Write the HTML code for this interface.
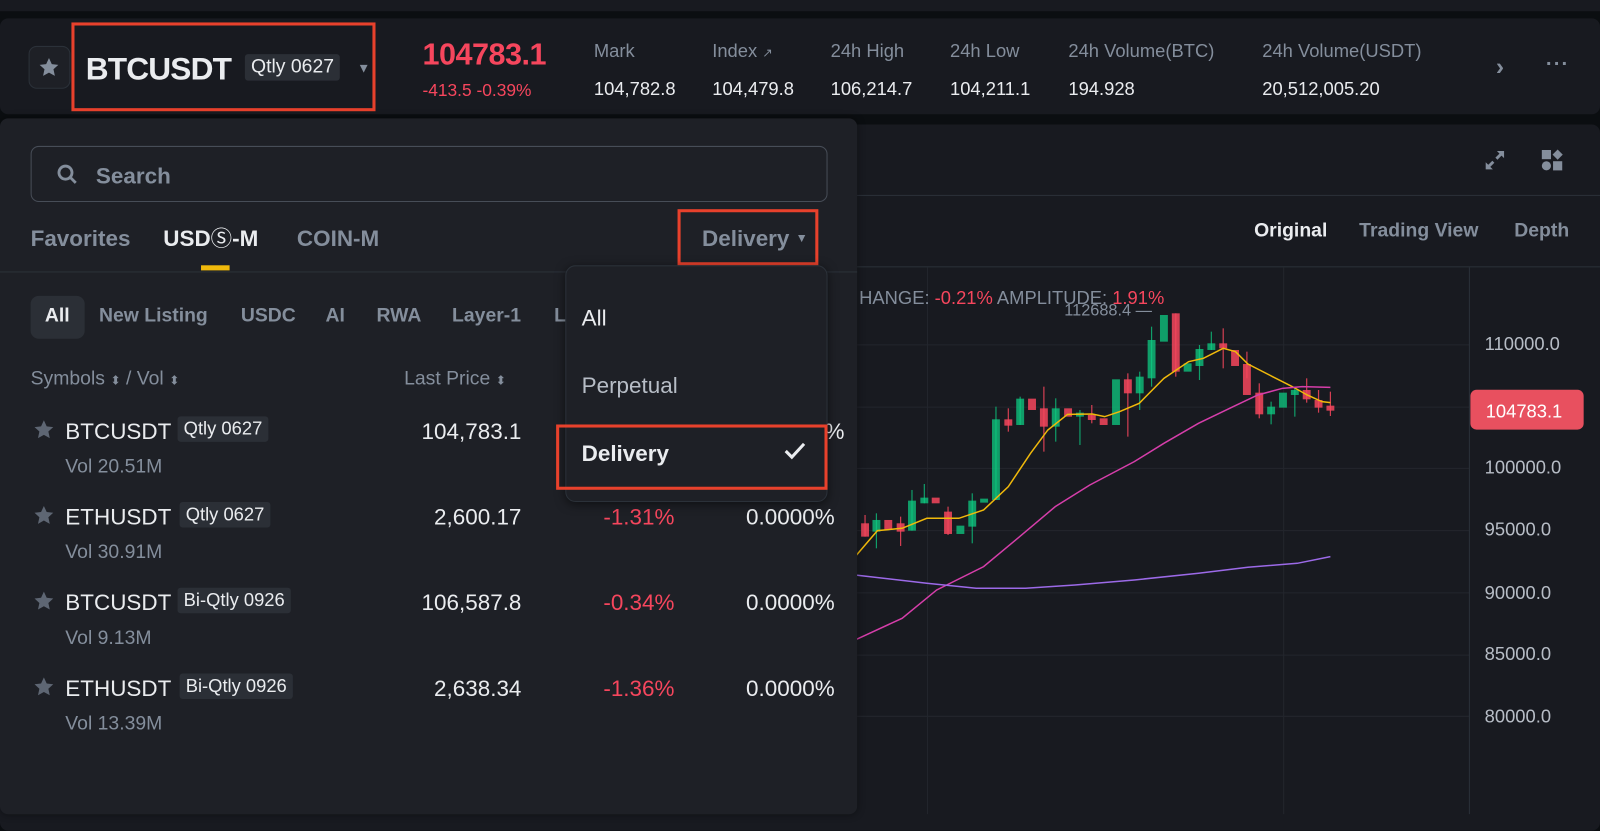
<!DOCTYPE html>
<html><head><meta charset="utf-8"><style>
*{margin:0;padding:0;box-sizing:border-box}
body{width:1600px;height:814px;overflow:hidden;background:#0b0e11;font-family:"Liberation Sans",sans-serif;position:relative;color:#eaecef}
#w{position:absolute;left:0;top:0;width:1568px;height:798px;transform:scale(1.0204);transform-origin:0 0}
.a{position:absolute;white-space:nowrap;line-height:1.15}
.g{color:#848e9c}
.w{color:#eaecef}
.r{color:#f6465d}
.red{border:3px solid #e8412c;position:absolute}
.tag{background:#2b2f36;border-radius:3px;padding:2px 6px;font-size:18px;color:#eaecef}
</style></head><body>
<div id="w">
<div class="a" style="left:0;top:0;width:1568px;height:11px;background:#181a20"></div>
<div class="a" style="left:0;top:18px;width:1568px;height:94px;background:#181a20;border-radius:8px"></div>
<div class="a" style="left:28px;top:45px;width:41px;height:42px;border:1px solid #2b3139;border-radius:8px;background:#1e2026"></div>
<svg class="a" style="left:37px;top:55px" width="22" height="22" viewBox="0 0 24 24"><path d="M12 2l3 6.5 7 .8-5.2 4.8 1.5 7L12 17.6 5.7 21.1l1.5-7L2 9.3l7-.8z" fill="#848e9c"/></svg>
<div class="a w" style="left:84px;top:50px;font-size:31px;font-weight:bold;letter-spacing:-0.8px">BTCUSDT</div>
<div class="a tag" style="left:240px;top:53px;font-size:19px">Qtly 0627</div>
<div class="a g" style="left:350px;top:60px;font-size:13px">▼</div>
<div class="red" style="left:70px;top:22px;width:298px;height:87px"></div>
<div class="a r" style="left:414px;top:37px;font-size:30px;font-weight:bold;letter-spacing:-0.5px">104783.1</div>
<div class="a r" style="left:414px;top:79px;font-size:17px">-413.5 -0.39%</div>
<div class="a g" style="left:582px;top:40px;font-size:18px">Mark</div>
<div class="a w" style="left:582px;top:77px;font-size:18px">104,782.8</div>
<div class="a g" style="left:698px;top:40px;font-size:18px">Index <span style="font-size:12px">↗</span></div>
<div class="a w" style="left:698px;top:77px;font-size:18px">104,479.8</div>
<div class="a g" style="left:814px;top:40px;font-size:18px">24h High</div>
<div class="a w" style="left:814px;top:77px;font-size:18px">106,214.7</div>
<div class="a g" style="left:931px;top:40px;font-size:18px">24h Low</div>
<div class="a w" style="left:931px;top:77px;font-size:18px">104,211.1</div>
<div class="a g" style="left:1047px;top:40px;font-size:18px">24h Volume(BTC)</div>
<div class="a w" style="left:1047px;top:77px;font-size:18px">194.928</div>
<div class="a g" style="left:1237px;top:40px;font-size:18px">24h Volume(USDT)</div>
<div class="a w" style="left:1237px;top:77px;font-size:18px">20,512,005.20</div>
<div class="a g" style="left:1466px;top:52px;font-size:24px;font-weight:bold">›</div>
<div class="a g" style="left:1515px;top:52px;font-size:20px;font-weight:bold;letter-spacing:1px">···</div>
<div class="a" style="left:0;top:122px;width:1568px;height:692px;background:#181a20;border-radius:8px"></div>
<div class="a" style="left:0;top:191px;width:1568px;height:1px;background:#2b3139"></div>
<div class="a" style="left:0;top:261px;width:1568px;height:1px;background:#2b3139"></div>
<svg class="a" style="left:1453px;top:145px" width="24" height="24" viewBox="0 0 24 24"><path d="M14 3h7v7l-2.5-2.5-4 4-2-2 4-4zM10 21H3v-7l2.5 2.5 4-4 2 2-4 4z" fill="#848e9c"/></svg>
<svg class="a" style="left:1509px;top:145px" width="24" height="24" viewBox="0 0 24 24"><rect x="2" y="2" width="9" height="9" fill="#848e9c"/><path d="M17.5 1.5l5 5-5 5-5-5z" fill="#848e9c"/><circle cx="6.5" cy="17.5" r="4.5" fill="#848e9c"/><rect x="13" y="13" width="9" height="9" fill="#848e9c"/></svg>
<div class="a w" style="left:1229px;top:216px;font-size:19px;font-weight:bold">Original</div>
<div class="a g" style="left:1332px;top:216px;font-size:19px;font-weight:bold">Trading View</div>
<div class="a g" style="left:1484px;top:216px;font-size:19px;font-weight:bold">Depth</div>
<svg class="a" style="left:0;top:0" width="1568" height="798">
<g stroke="#23262d" stroke-width="1">
<line x1="830" y1="338" x2="1440" y2="338"/><line x1="830" y1="399" x2="1440" y2="399"/><line x1="830" y1="459" x2="1440" y2="459"/><line x1="830" y1="520" x2="1440" y2="520"/><line x1="830" y1="581" x2="1440" y2="581"/><line x1="830" y1="642" x2="1440" y2="642"/><line x1="830" y1="702" x2="1440" y2="702"/>
<line x1="909" y1="262" x2="909" y2="798"/><line x1="1258" y1="262" x2="1258" y2="798"/><line x1="1440" y1="262" x2="1440" y2="798" stroke="#2b3139"/>
</g>
</svg>
</div>
<svg class="a" style="left:0;top:0" width="1600" height="814">
<g transform="translate(828,260) scale(0.494,0.3333)">
<g fill="#0ecb81" fill-opacity="0.75">
<rect x="90" y="780" width="16" height="35"/><rect x="162" y="722" width="16" height="90"/><rect x="187" y="713" width="16" height="17"/><rect x="260" y="797" width="16" height="25"/><rect x="284" y="722" width="16" height="78"/><rect x="308" y="716" width="16" height="12"/><rect x="332" y="478" width="16" height="242"/><rect x="381" y="416" width="16" height="79"/><rect x="453" y="445" width="16" height="55"/><rect x="502" y="458" width="16" height="12"/><rect x="575" y="358" width="16" height="137"/><rect x="623" y="350" width="16" height="50"/><rect x="647" y="240" width="16" height="115"/><rect x="672" y="165" width="16" height="80"/><rect x="720" y="310" width="16" height="25"/><rect x="744" y="267" width="16" height="51"/><rect x="768" y="250" width="16" height="20"/><rect x="889" y="440" width="16" height="23"/><rect x="913" y="398" width="16" height="45"/><rect x="937" y="390" width="16" height="15"/>
</g>
<g fill="#f6465d" fill-opacity="0.85">
<rect x="67" y="790" width="16" height="40"/><rect x="114" y="780" width="16" height="30"/><rect x="139" y="790" width="16" height="25"/><rect x="210" y="713" width="16" height="17"/><rect x="235" y="755" width="16" height="67"/><rect x="357" y="478" width="16" height="19"/><rect x="405" y="416" width="16" height="34"/><rect x="429" y="445" width="16" height="55"/><rect x="478" y="445" width="16" height="25"/><rect x="526" y="465" width="16" height="15"/><rect x="550" y="475" width="16" height="20"/><rect x="599" y="358" width="16" height="42"/><rect x="696" y="160" width="16" height="175"/><rect x="792" y="250" width="16" height="15"/><rect x="816" y="270" width="16" height="48"/><rect x="840" y="312" width="16" height="93"/><rect x="865" y="398" width="16" height="65"/><rect x="961" y="390" width="16" height="28"/><rect x="985" y="420" width="16" height="23"/><rect x="1009" y="437" width="16" height="15"/>
</g>
<g stroke="#0ecb81" stroke-opacity="0.75" stroke-width="1.2">
<line x1="98" y1="760" x2="98" y2="865" vector-effect="non-scaling-stroke"/><line x1="170" y1="690" x2="170" y2="812" vector-effect="non-scaling-stroke"/><line x1="195" y1="672" x2="195" y2="730" vector-effect="non-scaling-stroke"/><line x1="292" y1="700" x2="292" y2="850" vector-effect="non-scaling-stroke"/><line x1="340" y1="440" x2="340" y2="720" vector-effect="non-scaling-stroke"/><line x1="389" y1="410" x2="389" y2="495" vector-effect="non-scaling-stroke"/><line x1="461" y1="415" x2="461" y2="545" vector-effect="non-scaling-stroke"/><line x1="510" y1="450" x2="510" y2="555" vector-effect="non-scaling-stroke"/><line x1="631" y1="335" x2="631" y2="450" vector-effect="non-scaling-stroke"/><line x1="655" y1="200" x2="655" y2="380" vector-effect="non-scaling-stroke"/><line x1="752" y1="255" x2="752" y2="360" vector-effect="non-scaling-stroke"/><line x1="776" y1="215" x2="776" y2="270" vector-effect="non-scaling-stroke"/><line x1="897" y1="425" x2="897" y2="493" vector-effect="non-scaling-stroke"/><line x1="945" y1="380" x2="945" y2="470" vector-effect="non-scaling-stroke"/>
</g>
<g stroke="#f6465d" stroke-opacity="0.85" stroke-width="1.2">
<line x1="75" y1="765" x2="75" y2="830" vector-effect="non-scaling-stroke"/><line x1="147" y1="770" x2="147" y2="858" vector-effect="non-scaling-stroke"/><line x1="243" y1="740" x2="243" y2="825" vector-effect="non-scaling-stroke"/><line x1="365" y1="445" x2="365" y2="515" vector-effect="non-scaling-stroke"/><line x1="437" y1="380" x2="437" y2="575" vector-effect="non-scaling-stroke"/><line x1="534" y1="435" x2="534" y2="490" vector-effect="non-scaling-stroke"/><line x1="607" y1="340" x2="607" y2="530" vector-effect="non-scaling-stroke"/><line x1="800" y1="205" x2="800" y2="325" vector-effect="non-scaling-stroke"/><line x1="848" y1="275" x2="848" y2="355" vector-effect="non-scaling-stroke"/><line x1="873" y1="370" x2="873" y2="475" vector-effect="non-scaling-stroke"/><line x1="969" y1="355" x2="969" y2="428" vector-effect="non-scaling-stroke"/><line x1="993" y1="390" x2="993" y2="458" vector-effect="non-scaling-stroke"/><line x1="1017" y1="395" x2="1017" y2="468" vector-effect="non-scaling-stroke"/><line x1="704" y1="160" x2="704" y2="350" vector-effect="non-scaling-stroke"/>
</g>
<polyline fill="none" stroke="#f0b90b" stroke-width="1.5" vector-effect="non-scaling-stroke" points="55,890 100,812 150,805 200,775 265,775 315,750 365,680 410,580 445,510 485,463 535,462 560,470 590,455 630,430 680,355 730,305 760,295 800,265 825,275 850,312 900,350 940,380 970,405 1000,425 1017,428"/>
<polyline fill="none" stroke="#d63eaa" stroke-width="1.5" vector-effect="non-scaling-stroke" points="55,1140 150,1075 220,990 315,920 380,840 460,740 530,675 620,605 680,550 750,490 820,440 870,405 920,385 960,380 1017,382"/>
<polyline fill="none" stroke="#9c6ae8" stroke-width="1.5" vector-effect="non-scaling-stroke" points="55,945 200,970 300,985 400,985 500,975 620,960 750,940 850,922 950,910 1017,890"/>
</g>
</svg>
<div id="w" style="pointer-events:none">
<svg class="a" style="left:0;top:0" width="1568" height="798">
<text x="1043" y="309" font-size="16" fill="#848e9c" font-family="Liberation Sans">112688.4 —</text>
<text x="842" y="298" font-size="18" fill="#848e9c" font-family="Liberation Sans">HANGE:  <tspan fill="#f6465d">-0.21%</tspan>  AMPLITUDE:  <tspan fill="#f6465d">1.91%</tspan></text>
<g font-size="18" fill="#b7bdc6" font-family="Liberation Sans">
<text x="1455" y="343">110000.0</text><text x="1455" y="464">100000.0</text><text x="1455" y="525">95000.0</text><text x="1455" y="587">90000.0</text><text x="1455" y="647">85000.0</text><text x="1455" y="708">80000.0</text>
</g>
<rect x="1441" y="382" width="111" height="39" rx="6" fill="#e8505f"/>
<text x="1456" y="409" font-size="18" fill="#fff" font-family="Liberation Sans">104783.1</text>
</svg>
<div class="a" style="left:0;top:116px;width:840px;height:682px;background:#1e2026;border-radius:8px;box-shadow:0 0 8px rgba(0,0,0,.4)"></div>
<div class="a" style="left:30px;top:143px;width:781px;height:55px;border:1.5px solid #474d57;border-radius:8px"></div>
<svg class="a" style="left:55px;top:160px" width="22" height="22" viewBox="0 0 24 24"><circle cx="10" cy="10" r="7" fill="none" stroke="#848e9c" stroke-width="3"/><path d="M15 15l6 6" stroke="#848e9c" stroke-width="3"/></svg>
<div class="a g" style="left:94px;top:160px;font-size:22px;font-weight:bold">Search</div>
<div class="a g" style="left:30px;top:221px;font-size:22px;font-weight:bold">Favorites</div>
<div class="a w" style="left:160px;top:221px;font-size:22px;font-weight:bold;height:26px;line-height:26px">USD<span style="font-family:'DejaVu Sans';font-weight:normal;font-size:21px;line-height:26px;display:inline-block;vertical-align:top">Ⓢ</span>-M</div>
<div class="a" style="left:197px;top:260px;width:28px;height:5px;background:#f0b90b"></div>
<div class="a g" style="left:291px;top:221px;font-size:22px;font-weight:bold">COIN-M</div>
<div class="a g" style="left:688px;top:221px;font-size:22px;font-weight:bold">Delivery <span style="font-size:12px;vertical-align:4px">▼</span></div>
<div class="red" style="left:664px;top:205px;width:138px;height:55px"></div>
<div class="a" style="left:0;top:266px;width:840px;height:1px;background:#2b3139"></div>
<div class="a" style="left:30px;top:290px;width:53px;height:42px;background:#2b2f36;border-radius:8px"></div>
<div class="a w" style="left:44px;top:299px;font-size:19px;font-weight:bold">All</div>
<div class="a g" style="left:97px;top:299px;font-size:19px;font-weight:bold">New Listing</div>
<div class="a g" style="left:236px;top:299px;font-size:19px;font-weight:bold">USDC</div>
<div class="a g" style="left:319px;top:299px;font-size:19px;font-weight:bold">AI</div>
<div class="a g" style="left:369px;top:299px;font-size:19px;font-weight:bold">RWA</div>
<div class="a g" style="left:443px;top:299px;font-size:19px;font-weight:bold">Layer-1</div>
<div class="a g" style="left:543px;top:299px;font-size:19px;font-weight:bold">L</div>
<div class="a g" style="left:30px;top:361px;font-size:19px">Symbols <span style="font-size:12px">⬍</span> / Vol <span style="font-size:12px">⬍</span></div>
<div class="a g" style="left:396px;top:361px;font-size:19px">Last Price <span style="font-size:12px">⬍</span></div>

<div class="a" style="left:32px;top:410px"><svg width="22" height="22" viewBox="0 0 24 24"><path d="M12 2l3 6.5 7 .8-5.2 4.8 1.5 7L12 17.6 5.7 21.1l1.5-7L2 9.3l7-.8z" fill="#5e6673"/></svg></div>
<div class="a w" style="left:64px;top:410px;font-size:22px">BTCUSDT</div><div class="a tag" style="left:174px;top:408px">Qtly 0627</div>
<div class="a g" style="left:64px;top:447px;font-size:19px">Vol 20.51M</div>
<div class="a w" style="left:380px;width:131px;text-align:right;top:410px;font-size:22px">104,783.1</div>
<div class="a w" style="left:808px;top:410px;font-size:22px">%</div>

<div class="a" style="left:32px;top:494px"><svg width="22" height="22" viewBox="0 0 24 24"><path d="M12 2l3 6.5 7 .8-5.2 4.8 1.5 7L12 17.6 5.7 21.1l1.5-7L2 9.3l7-.8z" fill="#5e6673"/></svg></div>
<div class="a w" style="left:64px;top:494px;font-size:22px">ETHUSDT</div><div class="a tag" style="left:176px;top:492px">Qtly 0627</div>
<div class="a g" style="left:64px;top:531px;font-size:19px">Vol 30.91M</div>
<div class="a w" style="left:380px;width:131px;text-align:right;top:494px;font-size:22px">2,600.17</div>
<div class="a r" style="left:560px;width:101px;text-align:right;top:494px;font-size:22px">-1.31%</div>
<div class="a w" style="left:700px;width:118px;text-align:right;top:494px;font-size:22px">0.0000%</div>

<div class="a" style="left:32px;top:578px"><svg width="22" height="22" viewBox="0 0 24 24"><path d="M12 2l3 6.5 7 .8-5.2 4.8 1.5 7L12 17.6 5.7 21.1l1.5-7L2 9.3l7-.8z" fill="#5e6673"/></svg></div>
<div class="a w" style="left:64px;top:578px;font-size:22px">BTCUSDT</div><div class="a tag" style="left:174px;top:576px">Bi-Qtly 0926</div>
<div class="a g" style="left:64px;top:615px;font-size:19px">Vol 9.13M</div>
<div class="a w" style="left:380px;width:131px;text-align:right;top:578px;font-size:22px">106,587.8</div>
<div class="a r" style="left:560px;width:101px;text-align:right;top:578px;font-size:22px">-0.34%</div>
<div class="a w" style="left:700px;width:118px;text-align:right;top:578px;font-size:22px">0.0000%</div>

<div class="a" style="left:32px;top:662px"><svg width="22" height="22" viewBox="0 0 24 24"><path d="M12 2l3 6.5 7 .8-5.2 4.8 1.5 7L12 17.6 5.7 21.1l1.5-7L2 9.3l7-.8z" fill="#5e6673"/></svg></div>
<div class="a w" style="left:64px;top:662px;font-size:22px">ETHUSDT</div><div class="a tag" style="left:176px;top:660px">Bi-Qtly 0926</div>
<div class="a g" style="left:64px;top:699px;font-size:19px">Vol 13.39M</div>
<div class="a w" style="left:380px;width:131px;text-align:right;top:662px;font-size:22px">2,638.34</div>
<div class="a r" style="left:560px;width:101px;text-align:right;top:662px;font-size:22px">-1.36%</div>
<div class="a w" style="left:700px;width:118px;text-align:right;top:662px;font-size:22px">0.0000%</div>

<div class="a" style="left:554px;top:260px;width:257px;height:232px;background:#1e2026;border:1px solid #2b3139;border-radius:10px;box-shadow:0 2px 10px rgba(0,0,0,.5)"></div>
<div class="a w" style="left:570px;top:299px;font-size:22px">All</div>
<div class="a" style="left:570px;top:365px;font-size:22px;color:#b7bdc6">Perpetual</div>
<div class="a w" style="left:570px;top:432px;font-size:22px;font-weight:bold">Delivery</div>
<svg class="a" style="left:768px;top:432px" width="22" height="20" viewBox="0 0 22 20"><path d="M2 10l6 6L20 3" fill="none" stroke="#eaecef" stroke-width="3"/></svg>
<div class="red" style="left:545px;top:416px;width:266px;height:64px"></div>
</div>
</body></html>
